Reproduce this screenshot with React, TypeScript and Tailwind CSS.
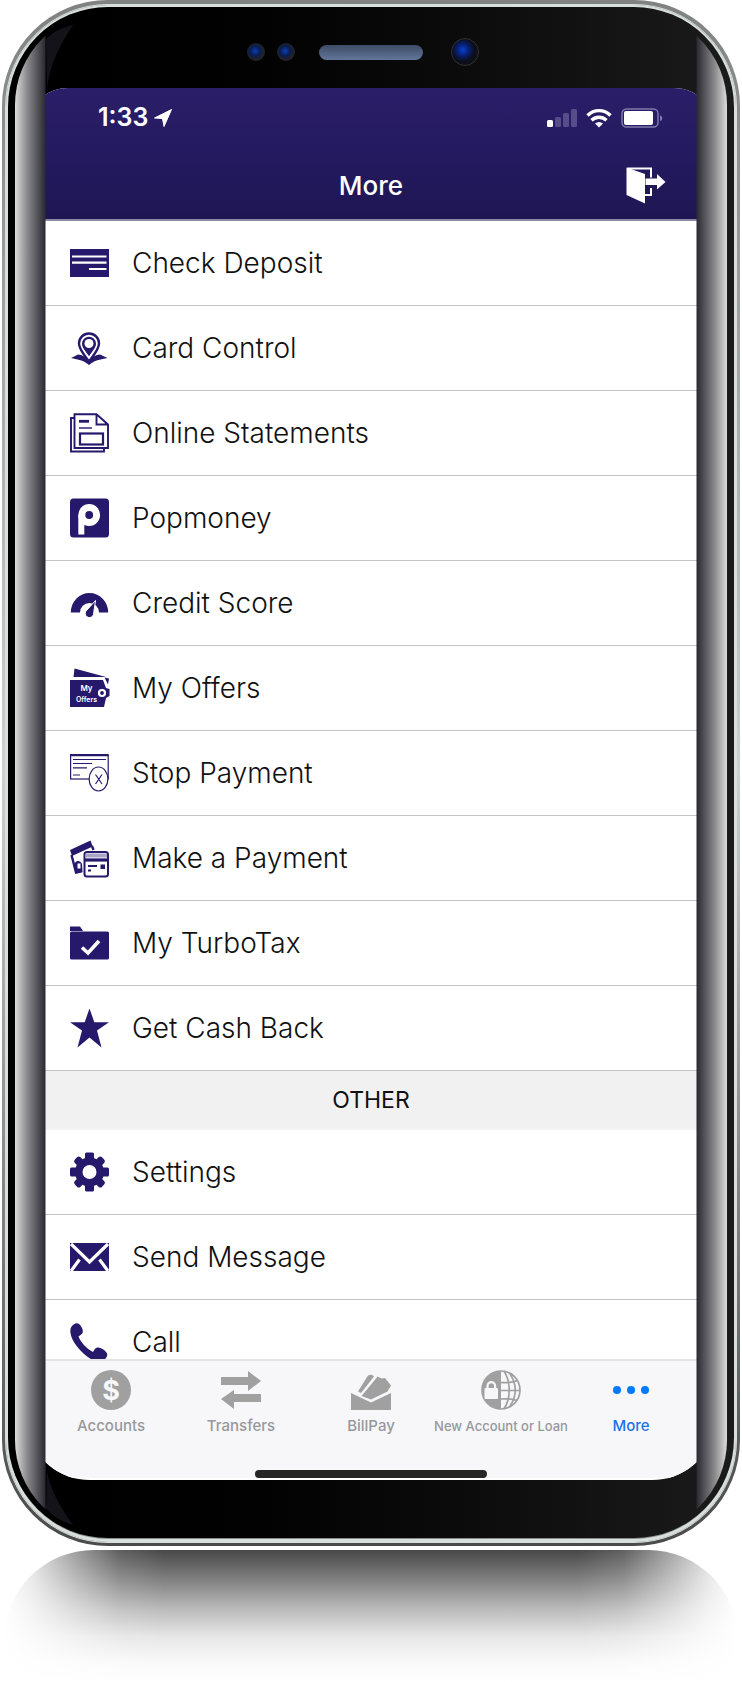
import type { ReactNode } from 'react';

const NAVY = '#26196b';
const FONT = "font-['Inter','Liberation_Sans',sans-serif]";

const icons: Record<string, ReactNode> = {
    check: (
        <>
            <rect x="0" y="6" width="39" height="28" fill={NAVY} />
            <path d="M2 13.5h34.5M2 19.7h34.5M19 26h17.5" stroke="#fff" strokeWidth="2.2" />
        </>
    ),
    card: (
        <>
            <path d="M1 30l7-3.500c4 0 8 2.500 11 6 3-3.500 7-6 11-6l7.500 3.500-7 1.500c-4 .6-8 2.500-11.500 5.500-3.500-3-7.500-4.900-11.500-5.500z" fill={NAVY} />
            <path d="M19 5.500a10 10 0 0 1 10 10c0 6-5.500 11.500-10 18-4.500-6.500-10-12-10-18a10 10 0 0 1 10-10z" fill="#fff" stroke={NAVY} strokeWidth="2.400" />
            <path d="M19 8.800a7 7 0 0 1 7 7c0 4-4 8-7 12.500-3-4.500-7-8.500-7-12.500a7 7 0 0 1 7-7z" fill={NAVY} />
            <circle cx="19" cy="15.500" r="4.500" fill="#fff" />
        </>
    ),
    statement: (
        <g fill="none" stroke={NAVY} strokeWidth="1.900">
            <path d="M4.500 5H1v33.500h33V35" />
            <path d="M4.500 1.300h22L38 11.500V35H4.500zM26.500 1.300v10.200H38" />
            <path d="M9 8.300h10" strokeWidth="2.800" />
            <path d="M9 15h13" strokeWidth="1.400" />
            <rect x="10" y="20.500" width="23" height="11" strokeWidth="2.200" />
        </g>
    ),
    popmoney: (
        <>
            <rect x="0" y="0.500" width="39" height="39" rx="3.500" fill={NAVY} />
            <circle cx="19.200" cy="17" r="7.400" fill="none" stroke="#fff" strokeWidth="7" />
            <rect x="8.300" y="17" width="6" height="19.500" fill="#fff" />
        </>
    ),
    score: (
        <>
            <path d="M.8 29.500a18.200 19 0 0 1 37.400 0H29a9.500 9.500 0 0 0-19 0z" fill={NAVY} />
            <path d="M25.500 17.500l-2 14a4.200 4.200 0 1 1-6.500-4.500z" fill={NAVY} stroke="#fff" strokeWidth="1" />
        </>
    ),
    offers: (
        <>
            <path d="M4.500.5L36 9H3.500z" fill={NAVY} />
            <path d="M34.500 9.500l4.500 1-1 6z" fill={NAVY} />
            <path d="M0 12h33l3 8 3.500 1v7L36 30l-2 9H0z" fill={NAVY} />
            <circle cx="32" cy="25" r="3" fill={NAVY} stroke="#fff" strokeWidth="2.200" />
            <text x="16.500" y="23" textAnchor="middle" fontSize="8" fontWeight="600" fill="#fff">My</text>
            <text x="16.500" y="34" textAnchor="middle" fontSize="7" fontWeight="600" fill="#fff">Offers</text>
        </>
    ),
    stop: (
        <g fill="none" stroke={NAVY} strokeWidth="1.200">
            <rect x="0.600" y="2" width="37.600" height="24" />
            <path d="M0 2.200h38.500" strokeWidth="2.200" />
            <path d="M3 6.500h33M3 10.500h19M3 14.800h14M3 22h7" />
            <ellipse cx="28.500" cy="26" rx="9.400" ry="12" fill="#fff" />
            <path d="M25.500 21.500l6.500 9.500M32 21.500l-6.500 9.500" />
        </g>
    ),
    payment: (
        <>
            <path d="M0 12L20.500 2.500l2.200 6L2 18z" fill={NAVY} />
            <path d="M1.500 17l4.500 17.500 6-1.500M22 8l1.500 4" fill="none" stroke={NAVY} strokeWidth="2.400" />
            <path d="M4.500 26c1-4 6-4 7.500 0l.5 8-6 1.500z" fill={NAVY} />
            <path d="M7.500 25.500h3v5h-3z" fill="#fff" />
            <rect x="14.500" y="14" width="23.500" height="24.500" rx="2.500" fill="#fff" stroke={NAVY} strokeWidth="2" />
            <path d="M15.500 17.500h21.500" stroke="#aaa5c4" strokeWidth="4" />
            <path d="M15 22h22.500" stroke={NAVY} strokeWidth="3.200" />
            <path d="M18 28h9M18 32.500h3" stroke={NAVY} strokeWidth="1.800" />
            <rect x="30.500" y="26.500" width="4.500" height="4.500" fill={NAVY} />
        </>
    ),
    folder: (
        <>
            <path d="M0 3.500h10l3 4.500H0z" fill={NAVY} />
            <rect x="0" y="8.500" width="39" height="28" rx="1.500" fill={NAVY} />
            <path d="M12 24.500l6 5.500L29 18" fill="none" stroke="#fff" strokeWidth="3.600" />
        </>
    ),
    star: <path d="M19.500.5l4.800 13.700H39L27 22.500 31.500 39.500l-12-10-12 10L12 22.500 0 14.200h14.700z" fill={NAVY} />,
    gear: (
        <g fill={NAVY}>
            <circle cx="19.500" cy="20" r="14.500" />
            <rect x="15" y="0.500" width="9" height="39" rx="1.500" />
            <rect x="15" y="0.500" width="9" height="39" rx="1.500" transform="rotate(90 19.500 20)" />
            <rect x="15.500" y="0.800" width="8" height="38.400" rx="2.500" transform="rotate(45 19.500 20)" />
            <rect x="15.500" y="0.800" width="8" height="38.400" rx="2.500" transform="rotate(-45 19.500 20)" />
            <circle cx="19.500" cy="20" r="7" fill="#fff" />
        </g>
    ),
    message: (
        <>
            <rect x="0" y="6" width="39" height="28" fill={NAVY} />
            <path d="M1 7l18.500 18L38 7M1 34l8.500-11.500M38 34l-8.500-11.500" fill="none" stroke="#fff" strokeWidth="3.200" />
        </>
    ),
    call: (
        <path
            d="M4 2.200C7 0 10 1.500 12 6c1.500 3 1 5.500-1.500 7l-2 1.500c2 5.500 9 13 14.500 15.500l1.500-2.500c2-2.500 4-2.500 7-1 6 3 7 6.500 4.500 9.500-3 4-8 4.500-12.500 2.500C12.500 33 1.500 20 .5 11-.2 7 1 4 4 2.200z"
            fill={NAVY}
        />
    ),
    accounts: (
        <>
            <circle cx="20" cy="20" r="20" fill="#a0a0a0" />
            <text x="20" y="29.500" textAnchor="middle" fontSize="27" fontWeight="700" fill="#f7f7f9">$</text>
        </>
    ),
    transfers: <path d="M0 7h27V1l13 10-13 10v-6H0zM40 32H13v7L0 29l13-9v4h27z" fill="#a0a0a0" />,
    billpay: (
        <g fill="#a0a0a0">
            <path d="M0 23l20 9.500 20-9.500v17H0z" />
            <path d="M10.500 26L25 8.500l1.500-2 4 2 3.500-.5 6 7.500-3.500 6L20 29.500z" />
            <path d="M7 21.500L16 7c1.500-2.500 5-3 7-.5L10 23z" />
        </g>
    ),
    globe: (
        <>
            <g fill="none" stroke="#a0a0a0" strokeWidth="1.700">
                <circle cx="20" cy="20" r="19" />
                <path d="M20 12.500c6 .5 12 0 16.500-2M20 20.500h19M20 29c6-.5 12 0 16 1.500M23 1c7 11 7 27 0 38M29 4c7 10 7 22 0 32" />
            </g>
            <path d="M20 1a19 19 0 0 0 0 38z" fill="#a0a0a0" />
            <rect x="3.500" y="18" width="13.500" height="11" rx="1" fill="#f7f7f9" />
            <path d="M6.500 18v-2a3.800 3.800 0 0 1 7.600 0v2" fill="none" stroke="#f7f7f9" strokeWidth="2.200" />
        </>
    ),
    dots: (
        <g fill="#007aff">
            <circle cx="6" cy="20" r="4" />
            <circle cx="20" cy="20" r="4" />
            <circle cx="34" cy="20" r="4" />
        </g>
    ),
};

const Icon = ({ name }: { name: string }) => (
    <svg viewBox="0 0 40 40" className="size-10 shrink-0" aria-hidden="true">
        {icons[name]}
    </svg>
);

const mainItems = [
    { icon: 'check', label: 'Check Deposit' },
    { icon: 'card', label: 'Card Control' },
    { icon: 'statement', label: 'Online Statements' },
    { icon: 'popmoney', label: 'Popmoney' },
    { icon: 'score', label: 'Credit Score' },
    { icon: 'offers', label: 'My Offers' },
    { icon: 'stop', label: 'Stop Payment' },
    { icon: 'payment', label: 'Make a Payment' },
    { icon: 'folder', label: 'My TurboTax' },
    { icon: 'star', label: 'Get Cash Back' },
];

const otherItems = [
    { icon: 'gear', label: 'Settings' },
    { icon: 'message', label: 'Send Message' },
    { icon: 'call', label: 'Call' },
];

const tabs = [
    { icon: 'accounts', label: 'Accounts', className: 'text-[15px] text-[#98989c]' },
    { icon: 'transfers', label: 'Transfers', className: 'text-[15px] text-[#98989c]' },
    { icon: 'billpay', label: 'BillPay', className: 'text-[15px] text-[#98989c]' },
    { icon: 'globe', label: 'New Account or Loan', className: 'text-[13px] text-[#98989c]' },
    { icon: 'dots', label: 'More', className: 'text-[15px] text-[#1a73ec]' },
];

const MenuList = ({ items }: { items: { icon: string; label: string }[] }) => (
    <ul>
        {items.map((item) => (
            <li key={item.label}>
                <a href="#" className="flex h-[85px] items-center gap-[22px] border-b border-[#c4c4c6] px-[38px] text-[28px] font-light text-[#111]">
                    <Icon name={item.icon} />
                    {item.label}
                </a>
            </li>
        ))}
    </ul>
);

const Bezel = () => (
    <div className="flex h-20 items-center justify-center pt-2 pr-4">
        <span className="size-[18px] rounded-full bg-[radial-gradient(circle_at_45%_45%,#0b3fb5_0,#0a1c50_35%,#242424_65%,#1c1c1c_100%)]" />
        <span className="ml-3 size-[18px] rounded-full bg-[radial-gradient(circle_at_45%_45%,#0b3fb5_0,#0a1c50_35%,#242424_65%,#1c1c1c_100%)]" />
        <span className="ml-6 h-[15px] w-[104px] rounded-full bg-linear-to-b from-[#3d4c66] to-[#63779a]" />
        <span className="ml-7 size-7 rounded-full border border-[#303030] bg-[radial-gradient(circle_at_42%_42%,#0a3fd0_0,#071f70_28%,#0c0e18_55%,#181818_100%)]" />
    </div>
);

const StatusBar = () => (
    <div className="flex h-[60px] items-center justify-between pr-[46px] pl-[66px]">
        <div className="flex items-center gap-1.5 text-[25px] font-semibold">
            1:33
            <svg viewBox="0 0 18 18" className="size-[18px]" fill="#fff" aria-hidden="true">
                <path d="M17.500.5L10 17.500 8.500 9.500 .5 9z" stroke="#fff" />
            </svg>
        </div>
        <svg viewBox="0 0 118 20" className="h-5 w-[118px]" aria-hidden="true">
            <rect x="1" y="12" width="6" height="7" rx="1.500" fill="#fff" />
            <g fill="#564d8a">
                <rect x="9" y="9" width="6" height="10" rx="1.500" />
                <rect x="17" y="5" width="6" height="14" rx="1.500" />
                <rect x="25" y="1" width="6" height="18" rx="1.500" />
            </g>
            <g fill="none" stroke="#fff" strokeWidth="3.400">
                <path d="M41.500 7.500c6.500-6.500 16.500-6.500 23 0" />
                <path d="M45.500 12.200c4.500-4 10.500-4 15 0" />
            </g>
            <path d="M49 15.500c2.500-2 5.500-2 8 0l-4 4z" fill="#fff" />
            <rect x="76" y="1" width="36" height="18" rx="4.500" fill="none" stroke="#8079ad" strokeWidth="1.500" />
            <rect x="78" y="3" width="29" height="14" rx="2" fill="#fff" />
            <path d="M114 7.500c3 .5 3 5 0 5.500z" fill="#8079ad" />
        </svg>
    </div>
);

const Header = () => (
    <header className="bg-linear-to-b from-[#2b1e69] via-[#231a60] to-[#1e1653] text-white">
        <StatusBar />
        <div className="grid h-[73px] grid-cols-[1fr_auto_1fr] items-center border-b-2 border-[#8d89a4] px-11 pt-1">
            <h1 className="col-start-2 text-[26px] font-medium">More</h1>
            <button type="button" aria-label="Log out" className="justify-self-end">
                <svg viewBox="0 0 40 37" className="h-[37px] w-10">
                    <path d="M1.500 1.500H25v9M25 21v7h-6" fill="none" stroke="#fff" strokeWidth="2" />
                    <path d="M.5.500L19 7v29.500L.5 28z" fill="#fff" />
                    <path d="M19.500 11.500H31V7l8.500 8L31 22.500V18H19.500z" fill="#fff" />
                </svg>
            </button>
        </div>
    </header>
);

const TabBar = () => (
    <nav className="border-t-2 border-[#e4e4e6] bg-[#f7f7f9] px-3.5 pt-[9px]">
        <ul className="grid grid-cols-5">
            {tabs.map((tab) => (
                <li key={tab.label}>
                    <a href="#" className="flex flex-col items-center gap-1.5 whitespace-nowrap">
                        <Icon name={tab.icon} />
                        <span className={`leading-5 font-medium ${tab.className}`}>{tab.label}</span>
                    </a>
                </li>
            ))}
        </ul>
        <div className="mx-auto mt-[34px] mb-0.5 h-2 w-[232px] rounded-full bg-[#262626]" />
    </nav>
);

// the outer 14px of the screen bend under the side glass
const Screen = () => (
    <div className="-mx-3.5 overflow-hidden bg-white [border-radius:36px_36px_58px_58px/30px_30px_50px_50px]">
        <Header />
        {/* the last row runs under the tab bar */}
        <div className="h-[1138px] overflow-hidden">
            <MenuList items={mainItems} />
            <h2 className="flex h-[59px] items-center justify-center bg-[#f1f1f1] text-[23px] text-[#111]">OTHER</h2>
            <MenuList items={otherItems} />
        </div>
        <TabBar />
    </div>
);

export default function App() {
    return (
        <main className={`${FONT} bg-white`}>
            {/* metal rim, two rings */}
            <div className="mx-0.5 rounded-[106px] bg-linear-to-b from-[#7f8280] via-[#cdd1cf] to-[#4a4a4a] px-[3px] pt-1 pb-[3px]">
                <div className="rounded-[103px] border border-[#d8dfdd] bg-[#8a8d8c] px-0.5 pt-0.5 pb-1 shadow-[inset_0_0_0_3px_#d8dfdd]">
                    <div className="relative rounded-[100px] bg-linear-to-r from-black via-[#070707] to-[#1b1b1b] px-[38px] pt-px pb-[58px]">
                        <Bezel />
                        <Screen />
                        {/* curved glass on both sides */}
                        <div className="pointer-events-none absolute inset-x-[7px] top-1 bottom-1 rounded-[94px] bg-[linear-gradient(to_right,#dcdcdc_0,#8b8b8d_12px,#2c2b34_30px,transparent_31px,transparent_calc(100%-31px),#2c2b34_calc(100%-30px),#8b8b8d_calc(100%-12px),#dcdcdc_100%)]" />
                        <svg viewBox="0 0 28 64" className="absolute top-[18px] left-[38px] h-16 w-7" aria-hidden="true">
                            <path d="M0 14C8 6 17 2 27 0 14 20 4 38 1 64z" fill="#15131a" />
                        </svg>
                        <svg viewBox="0 0 28 54" className="absolute bottom-[13px] left-[38px] h-[54px] w-7" aria-hidden="true">
                            <path d="M0 38c8 8 17 13 27 16C14 36 4 18 1 0z" fill="#15131a" />
                        </svg>
                    </div>
                </div>
            </div>
            {/* floor reflection */}
            <div className="mx-1 mt-1 h-[133px] rounded-t-[90px] bg-[linear-gradient(to_right,#fff_0,#ffffffd0_30px,#ffffff70_75px,#ffffff20_115px,transparent_160px,transparent_calc(100%-160px),#ffffff20_calc(100%-115px),#ffffff70_calc(100%-75px),#ffffffd0_calc(100%-30px),#fff_100%),linear-gradient(to_bottom,#484848_0,#808080_22%,#bcbcbc_45%,#e6e6e6_65%,#fafafa_85%,#fff_100%)]" />
        </main>
    );
}
